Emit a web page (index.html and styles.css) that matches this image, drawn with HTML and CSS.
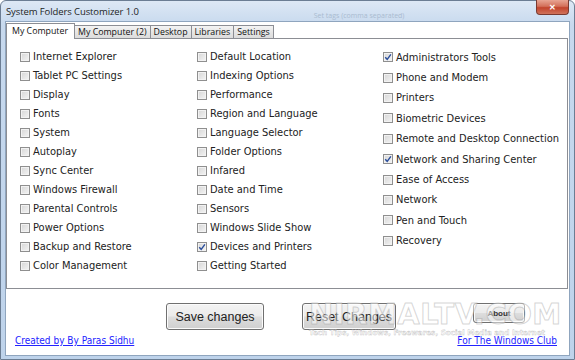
FILE: index.html
```html
<!DOCTYPE html>
<html lang="en">

<head>
    <meta charset="UTF-8">
    <meta name="viewport" content="width=device-width, initial-scale=1.0">
    <title>System Folders Customizer 1.0</title>
    <link rel="stylesheet" href="styles.css">
</head>

<body>
    <div class="window">
        <div class="titlebar">
            <span class="title">System Folders Customizer 1.0</span>
            <span class="ghost">Set tags (comma separated)</span>
            <button class="close">&#x2715;</button>
        </div>

        <div class="client">
            <div class="tabs">
                <div class="tab active">My Computer</div>
                <div class="tab">My Computer (2)</div>
                <div class="tab">Desktop</div>
                <div class="tab">Libraries</div>
                <div class="tab">Settings</div>
            </div>

            <div class="panel">
                <div class="col col-a">
                    <label class="item"><span class="box"></span>Internet Explorer</label>
                    <label class="item"><span class="box"></span>Tablet PC Settings</label>
                    <label class="item"><span class="box"></span>Display</label>
                    <label class="item"><span class="box"></span>Fonts</label>
                    <label class="item"><span class="box"></span>System</label>
                    <label class="item"><span class="box"></span>Autoplay</label>
                    <label class="item"><span class="box"></span>Sync Center</label>
                    <label class="item"><span class="box"></span>Windows Firewall</label>
                    <label class="item"><span class="box"></span>Parental Controls</label>
                    <label class="item"><span class="box"></span>Power Options</label>
                    <label class="item"><span class="box"></span>Backup and Restore</label>
                    <label class="item"><span class="box"></span>Color Management</label>
                </div>
                <div class="col col-b">
                    <label class="item"><span class="box"></span>Default Location</label>
                    <label class="item"><span class="box"></span>Indexing Options</label>
                    <label class="item"><span class="box"></span>Performance</label>
                    <label class="item"><span class="box"></span>Region and Language</label>
                    <label class="item"><span class="box"></span>Language Selector</label>
                    <label class="item"><span class="box"></span>Folder Options</label>
                    <label class="item"><span class="box"></span>Infared</label>
                    <label class="item"><span class="box"></span>Date and Time</label>
                    <label class="item"><span class="box"></span>Sensors</label>
                    <label class="item"><span class="box"></span>Windows Slide Show</label>
                    <label class="item"><span class="box checked"><svg viewBox="0 0 8 8"><path d="M1.2 4.2 L3.2 6.3 L6.9 1.3" /></svg></span>Devices and Printers</label>
                    <label class="item"><span class="box"></span>Getting Started</label>
                </div>
                <div class="col col-c">
                    <label class="item"><span class="box checked"><svg viewBox="0 0 8 8"><path d="M1.2 4.2 L3.2 6.3 L6.9 1.3" /></svg></span>Administrators Tools</label>
                    <label class="item"><span class="box"></span>Phone and Modem</label>
                    <label class="item"><span class="box"></span>Printers</label>
                    <label class="item"><span class="box"></span>Biometric Devices</label>
                    <label class="item"><span class="box"></span>Remote and Desktop Connection</label>
                    <label class="item"><span class="box checked"><svg viewBox="0 0 8 8"><path d="M1.2 4.2 L3.2 6.3 L6.9 1.3" /></svg></span>Network and Sharing Center</label>
                    <label class="item"><span class="box"></span>Ease of Access</label>
                    <label class="item"><span class="box"></span>Network</label>
                    <label class="item"><span class="box"></span>Pen and Touch</label>
                    <label class="item"><span class="box"></span>Recovery</label>
                </div>
            </div>

            <div class="actions">
                <button class="btn save">Save changes</button>
                <button class="btn reset">Reset Changes</button>
                <button class="btn about">About</button>
            </div>

            <div class="links">
                <a href="#">Created by By Paras Sidhu</a>
                <a href="#">For The Windows Club</a>
            </div>

            <!-- watermark sitting on top of the buttons -->
            <div class="watermark">
                <div class="wm-big">NIRMALTV.COM</div>
                <div class="wm-small">Tech Tips, Windows, Freewares, Social Media and Internet</div>
            </div>
        </div>
    </div>
</body>

</html>
```

FILE: styles.css
```css
* {
    margin: 0;
    padding: 0;
    box-sizing: border-box;
}

body {
    width: 575px;
    height: 360px;
    overflow: hidden;
    font-family: "DejaVu Sans Condensed", "DejaVu Sans", sans-serif;
}

.window {
    width: 575px;
    height: 360px;
    display: flex;
    flex-direction: column;
    border: 1px solid #6b7d93;
    border-radius: 6px 6px 0 0;
    background: linear-gradient(to bottom, #dde8f5, #c7d9ee 24px, #bed3eb);
}

.titlebar {
    height: 20px;
    display: flex;
    align-items: center;
    padding-left: 5px;
    position: relative;
}

.title {
    font-family: "Open Sans", sans-serif;
    font-size: 9.5px;
    color: #1e1e1e;
    letter-spacing: -0.1px;
}

.ghost {
    margin-left: 175px;
    margin-top: 8px;
    font-family: "Open Sans", sans-serif;
    font-size: 7px;
    color: #a9bbd0;
}

.close {
    position: absolute;
    top: -1px;
    right: 5px;
    width: 33px;
    height: 15px;
    border: 1px solid #7a3a30;
    border-top: none;
    border-radius: 0 0 4px 4px;
    background: linear-gradient(to bottom, #e8a593, #d3705a 45%, #c2442c 55%, #d0735b);
    color: #fff;
    font-size: 8px;
    font-weight: bold;
    line-height: 13px;
}

.client {
    flex: 1;
    margin: 0 4px 3px 4px;
    background: #fff;
    border: 1px solid #8fa5be;
    position: relative;
    display: flex;
    flex-direction: column;
}

.tabs {
    height: 16px;
    display: flex;
    align-items: flex-end;
    font-family: "Open Sans", sans-serif;
    font-size: 8.8px;
    color: #111;
}

.tab {
    height: 13px;
    padding: 0 3px;
    border: 1px solid #8c8e94;
    border-bottom: none;
    border-left: none;
    background: linear-gradient(to bottom, #f4f4f4, #e6e6e6 50%, #dcdcdc);
    line-height: 12px;
    white-space: nowrap;
}

.tab.active {
    height: 16px;
    margin-bottom: -1px;
    border-left: 1px solid #8c8e94;
    background: #fff;
    padding: 0 6px 0 5px;
    line-height: 15px;
    position: relative;
}

.panel {
    height: 251px;
    margin-right: 1px;
    border: 1px solid #8c8e94;
    display: grid;
    grid-template-columns: 177px 186px 1fr;
    padding: 8px 0 0 13px;
    font-size: 11px;
    color: #222;
}

.col {
    display: flex;
    flex-direction: column;
}

.item {
    height: 19px;
    display: flex;
    align-items: center;
    gap: 3px;
    white-space: nowrap;
}

.col-c .item {
    height: 20.4px;
}

.box {
    width: 10px;
    height: 10px;
    border: 1px solid #8f8f8f;
    background: linear-gradient(135deg, #d6d6d6, #f4f4f4);
    box-shadow: inset 0 0 0 1px #f2f2f2;
    display: flex;
    align-items: center;
    justify-content: center;
    flex-shrink: 0;
}

.box svg {
    width: 8px;
    height: 8px;
    fill: none;
    stroke: #2a4e9c;
    stroke-width: 1.4;
}

.actions {
    display: flex;
    align-items: flex-start;
    padding: 14px 0 0 160px;
}

.btn {
    height: 27px;
    border: 1px solid #707070;
    border-radius: 3px;
    background: linear-gradient(to bottom, #f3f3f3, #ebebeb 48%, #dddddd 52%, #cfcfcf);
    box-shadow: inset 0 0 0 1px #fbfbfb;
    font-family: "Liberation Sans", sans-serif;
    font-size: 12.5px;
    color: #222;
}

.save {
    width: 98px;
}

.reset {
    width: 94px;
    margin-left: 38px;
}

.about {
    width: 52px;
    height: 20px;
    margin-left: 77px;
    font-size: 8px;
    font-weight: bold;
    color: #333;
}

.links {
    display: flex;
    justify-content: space-between;
    padding: 4px 12px 0 9px;
    font-family: "DejaVu Sans Condensed", sans-serif;
    font-size: 10px;
    line-height: 13px;
}

.links a {
    color: #2323ff;
}

.watermark {
    position: absolute;
    left: 303px;
    top: 277px;
    pointer-events: none;
    font-family: "DejaVu Sans", sans-serif;
}

.wm-big {
    font-size: 29px;
    font-weight: bold;
    letter-spacing: 0.5px;
    color: rgba(255, 255, 255, 0.5);
    -webkit-text-stroke: 1px rgba(150, 150, 150, 0.4);
    line-height: 30px;
}

.wm-small {
    font-size: 7.2px;
    font-weight: bold;
    color: rgba(255, 255, 255, 0.7);
    -webkit-text-stroke: 0.4px rgba(140, 140, 140, 0.55);
    margin-top: -1px;
}
```
